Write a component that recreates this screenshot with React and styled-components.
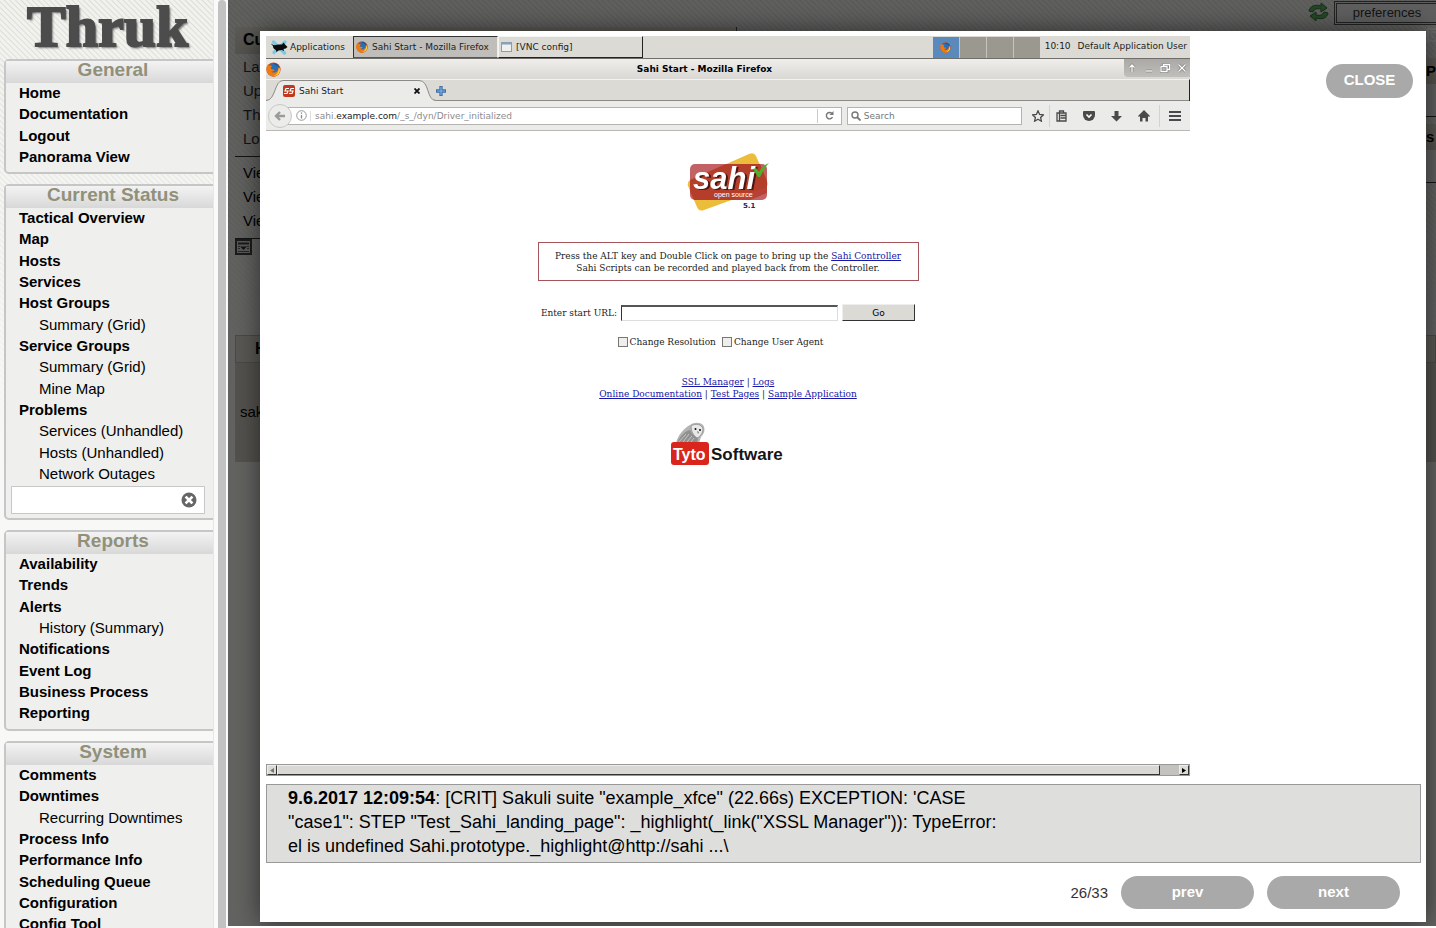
import React from "react";
import styled, { createGlobalStyle, css } from "styled-components";

const GlobalStyle = createGlobalStyle`
  * { box-sizing: border-box; }
  html, body, #root { height: 100%; }
  body {
    margin: 0;
    overflow: hidden;
    background: #fff;
    color: #000;
    font-family: "Liberation Sans", Arial, Helvetica, sans-serif;
    font-size: 15px;
  }
  button, input { font-family: inherit; }
  svg { flex-shrink: 0; }
`;

const stripes = css`
  background-image:
    linear-gradient(to bottom, rgba(248, 248, 246, 0), #f8f8f6 460px),
    repeating-linear-gradient(45deg, #f1f1ee 0, #f1f1ee 2px, #dcdcd6 3px, #f1f1ee 4px);
`;

const Page = styled.div`
  display: flex;
  height: 100%;
  min-height: 600px;
`;

/* ---------- navigation frame ---------- */

const Sidebar = styled.aside`
  flex: 0 0 213px;
  overflow: hidden;
  ${stripes}
`;

const Brand = styled.div`
  height: 59px;
  padding-left: 27px;
  font-family: "Liberation Serif", serif;
  font-size: 58px;
  font-weight: bold;
  line-height: 53px;
`;

const BrandText = styled.span`
  color: #4c4c4c;
  -webkit-text-stroke: 2px #4c4c4c;
  text-shadow: 2px 2px 2px rgba(0, 0, 0, 0.5);
`;

const Group = styled.section`
  margin: 0 -9px 10px 4px;
  padding-bottom: 4px;
  border: 2px solid #c6c6c6;
  border-radius: 5px;
  background: #efefed;
`;

const GroupTitle = styled.h2`
  margin: 0;
  height: 22px;
  background: linear-gradient(#f3f3f3, #d8d8d8);
  color: #91907a;
  font-size: 19px;
  line-height: 18px;
  text-align: center;
`;

const LinkList = styled.ul`
  margin: 0;
  padding: 0;
  list-style: none;
`;

const LinkItem = styled.li`
  height: 21px;
  padding-left: ${(p) => (p.$sub ? 33 : 13)}px;
  font-weight: ${(p) => (p.$sub ? "normal" : "bold")};
  line-height: 20px;
  white-space: nowrap;
  &:nth-child(3n + 2) { height: 22px; }
`;

const NavLink = styled.a`
  color: #000;
  text-decoration: none;
`;

const SearchBox = styled.label`
  display: flex;
  align-items: center;
  width: 194px;
  height: 28px;
  margin: 1px 0 0 5px;
  padding-right: 7px;
  border: 1px solid #c8c8c8;
  background: #fff;
`;

const SearchInput = styled.input`
  flex: 1;
  min-width: 0;
  border: 0;
  outline: 0;
  background: transparent;
  font-size: 15px;
`;

const PlainButton = styled.button`
  display: flex;
  padding: 0;
  border: 0;
  background: none;
`;

const ScrollTrack = styled.div`
  flex: 0 0 15px;
  padding-left: 4px;
  border-left: 1px solid #e6e6e6;
  background: #fafafa;
`;

const ScrollThumb = styled.div`
  width: 8px;
  height: 100%;
  border-radius: 4px 4px 0 0;
  background: #c2c2c2;
`;

/* ---------- status page under the overlay ---------- */

const Main = styled.main`
  position: relative;
  flex: 1;
  min-width: 0;
  margin-bottom: 2px;
  overflow: hidden;
  ${stripes}
`;

const Backdrop = styled.div`
  display: flex;
  justify-content: space-between;
  height: 335px;
`;

const InfoPanel = styled.div`
  width: 502px;
  margin: 27px 0 0 7px;
  border-right: 1px solid #555;
`;

const InfoHead = styled.div`
  height: 27px;
  padding-left: 8px;
  background: linear-gradient(#e4e1d8, #d2cfc2);
  font-size: 16px;
  font-weight: bold;
  line-height: 25px;
`;

const InfoRows = styled.div`
  padding: ${(p) => (p.$links ? 4 : 1)}px 0 5px 8px;
  border-bottom: 1px solid #333;
  line-height: 24px;
  color: ${(p) => (p.$links ? "#000" : "#333")};
`;

const TopRight = styled.div`
  display: flex;
  align-items: flex-start;
  justify-content: flex-end;
  gap: 5px;
  padding-top: 1px;
`;

const PrefButton = styled.button`
  width: 103px;
  height: 24px;
  margin-right: -1px;
  padding: 0 0 2px;
  border: 3px double #555;
  border-right: 0;
  background: #eee;
  color: #333;
  font-size: 13px;
`;

const TotalsColumn = styled.div`
  display: flex;
  flex-direction: column;
  align-items: flex-end;
`;

const Totals = styled.div`
  width: 10px;
  height: 59px;
  margin-bottom: 7px;
  border-bottom: 1px solid #333;
  background: #f0f0ee;
`;

const TotalsHead = styled.div`
  height: 26px;
  overflow: hidden;
  background: linear-gradient(#dedbcf, #cfccbe);
  font-weight: bold;
  line-height: 26px;
  white-space: nowrap;
`;

const HostHead = styled.div`
  height: 28px;
  margin-left: 7px;
  padding-left: 19px;
  border: 1px solid #b9b7ad;
  background: #dfddd3;
  font-size: 16px;
  font-weight: bold;
  line-height: 25px;
`;

const HostRow = styled.div`
  height: 99px;
  margin-left: 7px;
  padding-left: 5px;
  background: #d1cec2;
  line-height: 98px;
`;

const Overlay = styled.div`
  position: absolute;
  inset: 0;
  display: flex;
  padding: 31px 10px 4px 32px;
  background: rgba(0, 0, 0, 0.6);
`;

/* ---------- lightbox ---------- */

const Modal = styled.div`
  flex: 1;
  display: flex;
  flex-direction: column;
  min-width: 0;
  padding: 5px 5px 13px 6px;
  background: #fff;
  box-shadow: 0 0 24px rgba(0, 0, 0, 0.55);
`;

const Stage = styled.div`
  flex: 1;
  display: flex;
  justify-content: space-between;
  min-height: 0;
`;

const PillButton = styled.button`
  width: ${(p) => p.$width}px;
  height: ${(p) => (p.$width > 100 ? 33 : 34)}px;
  padding: 0 0 3px;
  border: 0;
  border-radius: 17px;
  background: #a9a9a9;
  color: #fff;
  font-size: 15px;
  font-weight: bold;
`;

const CloseSlot = styled.div`
  padding: 28px 8px 0 0;
`;

const Message = styled.div`
  margin-top: 8px;
  padding: 1px 21px 4px;
  border: 1px solid #999;
  background: #dededd;
  font-size: 18px;
  line-height: 24px;
`;

const Footer = styled.footer`
  display: flex;
  align-items: center;
  justify-content: flex-end;
  gap: 13px;
  margin-top: 13px;
  padding-right: 21px;
  color: #333;
`;

/* ---------- captured desktop ---------- */

const Shot = styled.div`
  width: 80%;
  display: flex;
  flex-direction: column;
  color: #1c1c1c;
  font-family: "DejaVu Sans", sans-serif;
  font-size: 9px;
`;

const Panel = styled.div`
  display: flex;
  height: 23px;
  border-bottom: 1px solid #6f6e6b;
  background: #dbdad5;
  white-space: nowrap;
`;

const AppMenu = styled.button`
  display: flex;
  align-items: center;
  gap: 2px;
  width: 87px;
  padding: 0 0 0 5px;
  border: 0;
  background: none;
  color: inherit;
  font-size: 9px;
`;

const Task = styled.button`
  display: flex;
  align-items: center;
  gap: 4px;
  width: 145px;
  padding: 0 0 0 2px;
  border: 1px solid;
  border-color: ${(p) => (p.$active ? "#333 #eee #555 #333" : "#f4f4f2 #222 #222 #f4f4f2")};
  background: ${(p) => (p.$active ? "#bfbeba" : "#dbdad5")};
  color: inherit;
  font-size: 9px;
  white-space: nowrap;
`;

const Pager = styled.div`
  display: flex;
  gap: 1px;
  margin: 1px 5px 0 auto;
  background: #c6c4be;
`;

const Desk = styled.div`
  display: flex;
  align-items: center;
  justify-content: center;
  width: 26px;
  background: ${(p) => (p.$active ? "#5a89bb" : "#9b9890")};
`;

const PanelText = styled.span`
  margin-right: ${(p) => p.$gap}px;
  line-height: 21px;
`;

const TitleBar = styled.div`
  display: flex;
  align-items: center;
  height: 20px;
  background: linear-gradient(#efeeeb, #d9d8d4);
`;

const WindowTitle = styled.div`
  flex: 1;
  padding-left: 4px;
  font-weight: bold;
  color: #000;
  text-align: center;
`;

const WindowButtons = styled.div`
  display: flex;
  align-items: center;
  justify-content: space-around;
  width: 66px;
  height: 18px;
  margin-bottom: 2px;
  border-radius: 0 0 0 4px;
  background: linear-gradient(#a9a8a4, #c0bfbb);
`;

const TabStrip = styled.div`
  display: flex;
  align-items: center;
  height: 22px;
  border-top: 1px solid #f2f2f0;
  border-right: 1px solid #222;
  background: linear-gradient(#dbdad5, #dbdad5 20px, #8b8a87 20px);
`;

const Tab = styled.div`
  position: relative;
  display: flex;
  align-items: center;
  gap: 4px;
  width: 170px;
  height: 21px;
  padding: 0 16px 0 17px;
`;

const TabShape = styled.svg`
  position: absolute;
  inset: 0;
`;

const TabLabel = styled.span`
  position: relative;
  flex: 1;
`;

const TabIcon = styled.span`
  position: relative;
  display: flex;
`;

const ToolBar = styled.div`
  display: flex;
  align-items: center;
  height: 30px;
  padding: 0 9px 0 2px;
  border-bottom: 1px solid #b9b8b4;
  background: #ebebe9;
`;

const BackButton = styled.button`
  display: flex;
  align-items: center;
  justify-content: center;
  z-index: 1;
  width: 24px;
  height: 24px;
  margin-right: -6px;
  padding: 0;
  border: 1px solid #c8c8c5;
  border-radius: 12px;
  background: #ececea;
`;

const Field = styled.label`
  display: flex;
  align-items: center;
  gap: 3px;
  flex: ${(p) => p.$grow} 1 0;
  min-width: 0;
  height: 18px;
  margin-right: 5px;
  padding-left: ${(p) => p.$pad}px;
  border: 1px solid #b4b3b0;
  background: #fff;
`;

const Address = styled.span`
  flex: 1;
  padding-left: 4px;
  border-left: 1px solid #ddd;
  color: #8c8c8c;
  white-space: nowrap;
  b { color: #222; font-weight: normal; }
`;

const FieldInput = styled.input`
  flex: 1;
  min-width: 0;
  padding: 0;
  border: 0;
  outline: 0;
  color: #777;
  font-size: 9px;
  &::placeholder { color: #777; }
`;

const Reload = styled.button`
  display: flex;
  align-items: center;
  justify-content: center;
  width: 24px;
  height: 14px;
  padding: 0;
  border: 0;
  border-left: 1px solid #ccc;
  background: none;
`;

const Tools = styled.div`
  display: flex;
  align-items: center;
  padding-left: 5px;
`;

const ToolButton = styled.button`
  display: flex;
  align-items: center;
  height: 22px;
  margin-right: ${(p) => p.$after}px;
  padding: 0 ${(p) => (p.$ruled ? p.$ruled : 0)}px 0 0;
  border: 0;
  border-right: ${(p) => (p.$ruled ? "1px solid #d2d2cf" : "0")};
  background: none;
`;

const Content = styled.div`
  flex: 1;
  display: flex;
  flex-direction: column;
  align-items: center;
  min-height: 0;
  padding-top: 21px;
  background: #fff;
  color: #222;
  font-family: "DejaVu Serif", serif;
  font-size: 9px;
  line-height: 12px;
  text-align: center;
  white-space: nowrap;
`;

const Notice = styled.p`
  width: 381px;
  margin: 30px 0 23px;
  padding: 7px 0 6px;
  border: 1px solid #a5545c;
`;

const PageLink = styled.a`
  color: #1616a8;
`;

const StartForm = styled.form`
  display: flex;
  align-items: center;
  gap: 4px;
  margin: 0;
`;

const UrlInput = styled.input`
  width: 217px;
  height: 16px;
  border: 1px solid #ddd;
  border-top: 2px solid #555;
  border-left: 1px solid #333;
  background: #fff;
`;

const GoButton = styled.button`
  width: 73px;
  height: 17px;
  padding: 0;
  border: 1px solid;
  border-color: #eee #333 #333 #eee;
  background: #dbdad5;
  font-family: "DejaVu Sans", sans-serif;
  font-size: 9px;
`;

const Options = styled.div`
  display: flex;
  gap: 6px;
  margin: 15px 0 28px;
  padding-right: 15px;
`;

const Option = styled.label`
  display: flex;
  align-items: center;
  gap: 2px;
`;

const Tick = styled.input`
  appearance: none;
  width: 10px;
  height: 10px;
  margin: 0;
  border: 1px solid #777;
  background: #efeeea;
`;

const Owl = styled.svg`
  margin-top: 22px;
`;

const HScroll = styled.div`
  display: flex;
  height: 12px;
  border: 1px solid #999;
  background: #c3c2be;
`;

const HArrow = styled.button`
  display: flex;
  align-items: center;
  justify-content: center;
  width: 10px;
  padding: 0;
  border: 1px solid;
  border-color: #eee #333 #333 #eee;
  background: #dbdad5;
`;

const HThumb = styled.div`
  flex: 1;
  margin-right: 19px;
  border: 1px solid;
  border-color: #eee #333 #333 #eee;
  background: #d9d8d4;
`;

/* ---------- drawings ---------- */

const Firefox = ({ size }) => (
  <svg width={size} height={size} viewBox="0 0 16 16">
    <circle cx="8" cy="8" r="7.6" fill="#d9490d" />
    <circle cx="8.6" cy="6.6" r="5.4" fill="#2a6fb5" />
    <path d="M7 1.6C11 1 14.500 4 14.600 8c-1-2-2-2-2-4-1 0-3-2-5.600-2.400Z" fill="#1b3d78" />
    <path d="M.6 6c.5-2.500 1.400-3.400 2-4 0 1 .4 1.600 1 2 1.500-.4 2.400 0 3 .8-1.500.4-1.700 1.400-1 2.400.8 1.200 2.600.6 3.600 1.200-.6 1.600-2.400 1.800-3.400 1.600 1.500 2 5 1.600 6.400-.6.700-1.200.8-2.400.6-3.600 1.600 1.400 2.200 3.600 1.400 5.800-1.600 4-7 5-10.400 2.600C1.400 12.400.2 9.600.6 6Z" fill="#ee7b12" />
    <path d="M13.600 5c1.600 2 1.700 5 .2 7-1.400 2-4 3-6 2.800 4-.8 6.200-4.800 5.800-9.800Z" fill="#fcd43a" />
  </svg>
);

const XfceMouse = () => (
  <svg width="17" height="16" viewBox="0 0 17 16">
    <path d="M2.500 3l11 11M14 3 3 13.500" stroke="#7cc7e2" strokeWidth="3.200" strokeLinecap="round" />
    <path d="M0 4.500c1 .4 2 1.400 3.500 1.800C6 5.200 9 5.600 11 5.600l1.600-2 1 1.400L16.500 8l-1.700 1.400-2.300.6.600 2-2.300-1-3.300.6-2 1.400-.6-2C3 10.400 1.800 8.600 2 7 1 6.400.4 5.400 0 4.500Z" fill="#0a0a0a" />
  </svg>
);

const SahiMark = styled.text`
  filter: drop-shadow(2px 1px 0 #4a1612);
`;

const SahiLogo = () => (
  <svg width="84" height="60" viewBox="0 0 84 60">
    <path d="M4 28 63 2Q68 0 70 4L81 29Q83 34 79 36L18 58Q13 60 11 55L2 34Q1 30 4 28Z" fill="#ecbd3a" />
    <rect x="4" y="12" width="77" height="36" rx="5" fill="#b2363a" fillOpacity="0.78" />
    <path d="M24 19 40 12H74l7 17v12L64 48H8L4 39V28Z" fill="#b03423" fillOpacity="0.7" />
    <SahiMark x="7" y="37" fontFamily="Liberation Sans" fontSize="31" fontStyle="italic" fontWeight="bold" fill="#fff">sahi</SahiMark>
    <text x="28" y="45" fontFamily="Liberation Sans" fontSize="7" fill="#fff">open source</text>
    <text x="57" y="56" fontFamily="DejaVu Sans" fontSize="7" fontWeight="bold" fill="#25256a">5.1</text>
    <path d="M67 17l3-1 3 4c2-4 5-7 10-9-4 4-6 8-9 14h-2Z" fill="#4fb12a" />
  </svg>
);

const TytoLogo = () => (
  <Owl width="116" height="45" viewBox="0 0 116 45">
    <path d="M6 21C8 13 14 6 20 3c4-3 10-3 13 0 3 4 1 9-2 12l-2 6Z" fill="#b4b4b4" />
    <path d="M7 21C10 14 15 9 20 8c2 4 4 6 8 8l-1 5Z" fill="#909090" />
    <path d="M9 20l7-8M13 20l6-8M17 20l5-6M21 20l3-4" stroke="#c4c4c4" />
    <path d="M21 4c4-3 11-2 12 3 0 4-3 8-6 9-4-3-6-7-6-12Z" fill="#e8e8e8" stroke="#999" />
    <circle cx="25.500" cy="7" r="1" fill="#111" />
    <circle cx="30" cy="8" r="1" fill="#111" />
    <path d="M27 9l1 3 1-2" fill="#777" />
    <rect x="1" y="20" width="38" height="23" rx="3" fill="#da251c" />
    <text x="3" y="38" fontFamily="Liberation Sans" fontSize="16" fontWeight="bold" fill="#fff">Tyto</text>
    <text x="41" y="38" fontFamily="Liberation Sans" fontSize="17" fontWeight="bold" fill="#151515">Software</text>
  </Owl>
);

const RefreshArrows = () => (
  <svg width="21" height="22" viewBox="0 0 21 20">
    <path d="M1 9C2 4 7 2 13 4V1l6 5-6 4V7C9 6 6 7 5 10Z" fill="#5fae62" stroke="#2f7a34" />
    <path d="M20 11c-1 5-6 7-12 5v3l-6-5 6-4v3c4 1 7 0 8-3Z" fill="#5fae62" stroke="#2f7a34" />
  </svg>
);

const FilterIcon = () => (
  <svg width="17" height="16" viewBox="0 0 17 16">
    <rect x="1" y="1" width="15" height="14" fill="#ddd" stroke="#444" strokeWidth="2" />
    <path d="M3 4.500h11" stroke="#444" strokeWidth="2" />
    <path d="M3 7.500h2M12 7.500h2M3 9.500h2M12 9.500h2M3 12.500h11" stroke="#666" />
    <path d="M5 7.500h7L8.500 11Z" fill="#333" />
  </svg>
);

const ClearIcon = () => (
  <svg width="16" height="16" viewBox="0 0 16 16">
    <circle cx="8" cy="8" r="7.500" fill="#666" />
    <path d="M5.500 5.500l5 5M10.500 5.500l-5 5" stroke="#fff" strokeWidth="2.600" strokeLinecap="square" />
  </svg>
);

const toolShapes = [
  { name: "Bookmark", w: 12, after: 6, ruled: 5, d: "M6 .8l1.600 3.600 3.800.4-2.800 2.600.8 3.800L6 9.300l-3.400 1.900.8-3.800L.6 4.800l3.800-.4Z" },
  { name: "Bookmarks list", w: 11, after: 16, d: "M1 3h9v8H1ZM3.500 3V1h4v2M3.500 3v8M4.500 5.500h5M4.500 8h5" },
  { name: "Pocket", w: 12, after: 16, solid: true, d: "M1 1h10q1 0 1 1v3a6 6 0 0 1-12 0V2q0-1 1-1Z", mark: "M3.500 4.500 6 7l2.500-2.500" },
  { name: "Downloads", w: 11, after: 16, solid: true, d: "M3.500 1h4v5H11L5.500 11.500 0 6h3.500Z" },
  { name: "Home page", w: 12, after: 9, ruled: 9, solid: true, d: "M6 0l6 6-1 1-1-1v5.500H7.500V8h-3v3.500H2V6L1 7 0 6Z" },
  { name: "Menu", w: 12, after: 0, d: "M0 2h12M0 6h12M0 10h12", thick: true },
];

const ToolIcon = ({ w, d, solid, mark, thick }) => (
  <svg width={w} height="12" viewBox={`0 0 ${w} 12`}>
    <path d={d} fill={solid ? "#4a4a4a" : "none"} stroke={solid ? "none" : "#4a4a4a"} strokeWidth={thick ? 2 : 1.3} />
    {mark && <path d={mark} fill="none" stroke="#fff" strokeWidth="1.600" />}
  </svg>
);

const windowGlyphs = [
  "M5 9V2M2.500 4.500 5 2l2.500 2.500",
  "M2 8h6",
  "M3.500 3.500V1.500h6v5h-2M1 3.500h6v5H1Z",
  "M1.500 1.500l7 7M8.500 1.500l-7 7",
];

/* ---------- data ---------- */

const groups = [
  { title: "General", items: [["Home"], ["Documentation"], ["Logout"], ["Panorama View"]] },
  {
    title: "Current Status",
    search: true,
    items: [
      ["Tactical Overview"], ["Map"], ["Hosts"], ["Services"], ["Host Groups"],
      ["Summary", "Grid", true], ["Service Groups"], ["Summary", "Grid", true], ["Mine Map", null, true],
      ["Problems"], ["Services", "Unhandled", true], ["Hosts", "Unhandled", true], ["Network Outages", null, true],
    ],
  },
  {
    title: "Reports",
    items: [
      ["Availability"], ["Trends"], ["Alerts"], ["History", "Summary", true],
      ["Notifications"], ["Event Log"], ["Business Process"], ["Reporting"],
    ],
  },
  {
    title: "System",
    items: [
      ["Comments"], ["Downtimes"], ["Recurring Downtimes", null, true], ["Process Info"],
      ["Performance Info"], ["Scheduling Queue"], ["Configuration"], ["Config Tool"],
    ],
  },
];

function NavGroup({ title, items, search }) {
  return (
    <Group>
      <GroupTitle>{title}</GroupTitle>
      <LinkList>
        {items.map(([label, extra, sub], i) => (
          <LinkItem key={i} $sub={sub}>
            <NavLink href="#">{label}</NavLink>
            {extra && <> (<NavLink href="#">{extra}</NavLink>)</>}
          </LinkItem>
        ))}
      </LinkList>
      {search && (
        <SearchBox>
          <SearchInput type="text" aria-label="Search" />
          <PlainButton type="button" aria-label="Clear"><ClearIcon /></PlainButton>
        </SearchBox>
      )}
    </Group>
  );
}

function Desktop() {
  return (
    <Shot>
      <Panel>
        <AppMenu><XfceMouse />Applications</AppMenu>
        <Task $active><Firefox size={12} />Sahi Start - Mozilla Firefox</Task>
        <Task>
          <svg width="11" height="10" viewBox="0 0 11 10">
            <rect x="0.500" y="0.500" width="10" height="9" fill="#f0f0ee" stroke="#999" />
            <path d="M0 1.500h11" stroke="#7fa3c4" strokeWidth="2" />
          </svg>
          [VNC config]
        </Task>
        <Pager>
          <Desk $active><Firefox size={11} /></Desk>
          <Desk /><Desk /><Desk />
        </Pager>
        <PanelText $gap={7}>10:10</PanelText>
        <PanelText $gap={3}>Default Application User</PanelText>
      </Panel>
      <TitleBar>
        <Firefox size={15} />
        <WindowTitle>Sahi Start - Mozilla Firefox</WindowTitle>
        <WindowButtons>
          {windowGlyphs.map((d) => (
            <svg key={d} width="10" height="10" viewBox="0 0 10 10">
              <path d={d} fill="none" stroke="#777" strokeWidth="2.600" />
              <path d={d} fill="none" stroke="#fff" strokeWidth="1.300" />
            </svg>
          ))}
        </WindowButtons>
      </TitleBar>
      <TabStrip>
        <Tab>
          <TabShape width="170" height="21" viewBox="0 0 170 21">
            <path d="M0 20.500C10 20.500 8 .5 17 .5H153C164 .5 160 20.500 170 20.500V21H0Z" fill="#ebebe9" />
            <path d="M0 20.500C10 20.500 8 .5 17 .5H153C164 .5 160 20.500 170 20.500" fill="none" stroke="#8b8a87" />
          </TabShape>
          <TabIcon>
            <svg width="12" height="12" viewBox="0 0 12 12">
              <rect width="12" height="12" rx="2" fill="#c0391b" />
              <path d="M6 3.500H3L2 6H5L4 8.500H1M11 3.500H8L7 6H10L9 8.500H6" fill="none" stroke="#fff" strokeWidth="1.200" />
            </svg>
          </TabIcon>
          <TabLabel>Sahi Start</TabLabel>
          <TabIcon>
            <svg width="6" height="6" viewBox="0 0 6 6"><path d="M.5.5l5 5M5.500.5l-5 5" stroke="#111" strokeWidth="1.800" /></svg>
          </TabIcon>
        </Tab>
        <svg width="10" height="10" viewBox="0 0 9 9">
          <path d="M3 0h3v3h3v3H6v3H3V6H0V3h3Z" fill="#3f6fac" />
          <path d="M4 1h1v3h3v1H5v3H4V5H1V4h3Z" fill="#7fb0e6" />
        </svg>
      </TabStrip>
      <ToolBar>
        <BackButton aria-label="Back">
          <svg width="12" height="10" viewBox="0 0 12 10"><path d="M6 1 2 5l4 4M2 5h9" fill="none" stroke="#9b9b9b" strokeWidth="2.400" /></svg>
        </BackButton>
        <Field as="div" $grow={557} $pad={9}>
          <svg width="11" height="11" viewBox="0 0 11 11">
            <circle cx="5.500" cy="5.500" r="4.800" fill="none" stroke="#999" />
            <path d="M5.500 5v3.500M5.500 2.500v1.300" stroke="#888" strokeWidth="1.300" />
          </svg>
          <Address>sahi.<b>example.com</b>/_s_/dyn/Driver_initialized</Address>
          <Reload aria-label="Reload">
            <svg width="9" height="9" viewBox="0 0 9 9"><path d="M7 2.500A3.200 3.200 0 1 0 7.500 6" fill="none" stroke="#777" strokeWidth="1.400" /><path d="M8.500 0v4h-4Z" fill="#777" /></svg>
          </Reload>
        </Field>
        <Field $grow={174} $pad={3}>
          <svg width="10" height="10" viewBox="0 0 10 10"><circle cx="4" cy="4" r="3" fill="none" stroke="#777" strokeWidth="1.400" /><path d="M6 6l3.500 3.500" stroke="#777" strokeWidth="1.800" /></svg>
          <FieldInput placeholder="Search" aria-label="Search" />
        </Field>
        <Tools>
          {toolShapes.map(({ name, after, ruled, ...shape }) => (
            <ToolButton key={name} aria-label={name} $after={after} $ruled={ruled}>
              <ToolIcon {...shape} />
            </ToolButton>
          ))}
        </Tools>
      </ToolBar>
      <Content>
        <SahiLogo />
        <Notice>
          Press the ALT key and Double Click on page to bring up the <PageLink href="#">Sahi Controller</PageLink>
          <br />
          Sahi Scripts can be recorded and played back from the Controller.
        </Notice>
        <StartForm>
          <label htmlFor="start-url">Enter start URL:</label>
          <UrlInput id="start-url" type="text" />
          <GoButton type="button">Go</GoButton>
        </StartForm>
        <Options>
          <Option><Tick type="checkbox" />Change Resolution</Option>
          <Option><Tick type="checkbox" />Change User Agent</Option>
        </Options>
        <div>
          <PageLink href="#">SSL Manager</PageLink> | <PageLink href="#">Logs</PageLink>
          <br />
          <PageLink href="#">Online Documentation</PageLink> | <PageLink href="#">Test Pages</PageLink> | <PageLink href="#">Sample Application</PageLink>
        </div>
        <TytoLogo />
      </Content>
      <HScroll>
        <HArrow aria-label="Scroll left"><svg width="4" height="5" viewBox="0 0 4 5"><path d="M4 0v5L0 2.500Z" fill="#777" /></svg></HArrow>
        <HThumb />
        <HArrow aria-label="Scroll right"><svg width="4" height="5" viewBox="0 0 4 5"><path d="M0 0v5l4-2.500Z" fill="#000" /></svg></HArrow>
      </HScroll>
    </Shot>
  );
}

export default function App() {
  return (
    <Page>
      <GlobalStyle />
      <Sidebar>
        <Brand><BrandText>Thruk</BrandText></Brand>
        {groups.map((g) => <NavGroup key={g.title} {...g} />)}
      </Sidebar>
      <ScrollTrack><ScrollThumb /></ScrollTrack>
      <Main>
        <Backdrop>
          <InfoPanel>
            <InfoHead>Cur</InfoHead>
            <InfoRows>Las<br />Up<br />Thr<br />Log</InfoRows>
            <InfoRows $links>Vie<br />Vie<br />Vie</InfoRows>
            <FilterIcon />
          </InfoPanel>
          <TotalsColumn>
            <TopRight>
              <RefreshArrows />
              <PrefButton>preferences</PrefButton>
            </TopRight>
            <svg width="9" height="33" viewBox="0 0 9 33">
              <path d="M9 4H1v12h8M4 7h5M4 10l3 3" fill="none" stroke="#fff" strokeWidth="2" />
            </svg>
            <Totals><TotalsHead>Pe</TotalsHead></Totals>
            <Totals><TotalsHead>s</TotalsHead></Totals>
          </TotalsColumn>
        </Backdrop>
        <HostHead>Hos</HostHead>
        <HostRow>saku</HostRow>
        <Overlay>
          <Modal role="dialog" aria-label="Screenshot">
            <Stage>
              <Desktop />
              <CloseSlot><PillButton $width={87}>CLOSE</PillButton></CloseSlot>
            </Stage>
            <Message>
              <b>9.6.2017 12:09:54</b>: [CRIT] Sakuli suite "example_xfce" (22.66s) EXCEPTION: 'CASE
              <br />
              "case1": STEP "Test_Sahi_landing_page": _highlight(_link("XSSL Manager")): TypeError:
              <br />
              el is undefined Sahi.prototype._highlight@http://sahi ...\
            </Message>
            <Footer>
              <span>26/33</span>
              <PillButton $width={133}>prev</PillButton>
              <PillButton $width={133}>next</PillButton>
            </Footer>
          </Modal>
        </Overlay>
      </Main>
    </Page>
  );
}
